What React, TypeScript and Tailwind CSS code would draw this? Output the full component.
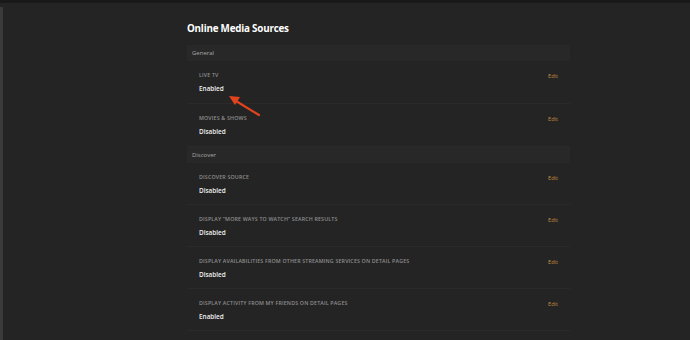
import React from "react";

type Setting = { label: string; value: string };

const sections: { title: string; rowH: string; items: Setting[] }[] = [
  {
    title: "General",
    rowH: "h-[43px]",
    items: [
      { label: "Live TV", value: "Enabled" },
      { label: "Movies & Shows", value: "Disabled" },
    ],
  },
  {
    title: "Discover",
    rowH: "h-[42px]",
    items: [
      { label: "Discover Source", value: "Disabled" },
      { label: "Display \u201cMore Ways to Watch\u201d search results", value: "Disabled" },
      { label: "Display availabilities from other streaming services on detail pages", value: "Disabled" },
      { label: "Display activity from my friends on detail pages", value: "Enabled" },
    ],
  },
];

function SettingRow({ label, value, rowH }: Setting & { rowH: string }) {
  return (
    <div className={`flex ${rowH} items-start justify-between border-b border-[#2a2a2a] pl-[12px] pr-[12px] pt-[10px]`}>
      <div className="flex flex-col">
        <span className="h-[8px] text-[5.3px] leading-[8px] font-semibold uppercase tracking-[0.03em] text-[#8e8e8e]">
          {label}
        </span>
        <span className="mt-[5px] h-[10px] text-[6.4px] leading-[10px] font-semibold text-[#f0f0f0]">{value}</span>
      </div>
      <span className="cursor-pointer pt-[1px] text-[5.6px] leading-[8px] text-[#c08c3e]">Edit</span>
    </div>
  );
}

export default function App() {
  return (
    <div className="flex h-[340px] w-[690px] flex-col overflow-hidden bg-[#242424]" style={{ fontFamily: '"Open Sans", "Liberation Sans", sans-serif' }}>
      <div className="h-[3px] shrink-0 bg-[#191919]" />
      <div className="flex flex-1">
        <div className="mt-[4px] w-[3px] shrink-0 bg-[#3a3a3a]" />
        <div className="relative ml-[184px] w-[383px] pt-[19px]">
          <h1 className="h-[14px] text-[9.8px] leading-[14px] font-bold tracking-[-0.02em] text-white">Online Media Sources</h1>
          <div className="mt-[9px]">
            {sections.map((s) => (
              <div key={s.title}>
                <div className="flex h-[16px] items-center bg-[#282828] pl-[5px] text-[6px] text-[#a8a8a8]">{s.title}</div>
                {s.items.map((it) => (
                  <SettingRow key={it.label} rowH={s.rowH} {...it} />
                ))}
              </div>
            ))}
          </div>
          <svg className="absolute left-[38px] top-[87px]" width="40" height="30" viewBox="0 0 40 30">
            <line x1="34" y1="25" x2="11" y2="11" stroke="#e2431f" strokeWidth="2.2" strokeLinecap="round" />
            <polygon points="4,6 15,7 10,15" fill="#e2431f" />
          </svg>
        </div>
      </div>
    </div>
  );
}
